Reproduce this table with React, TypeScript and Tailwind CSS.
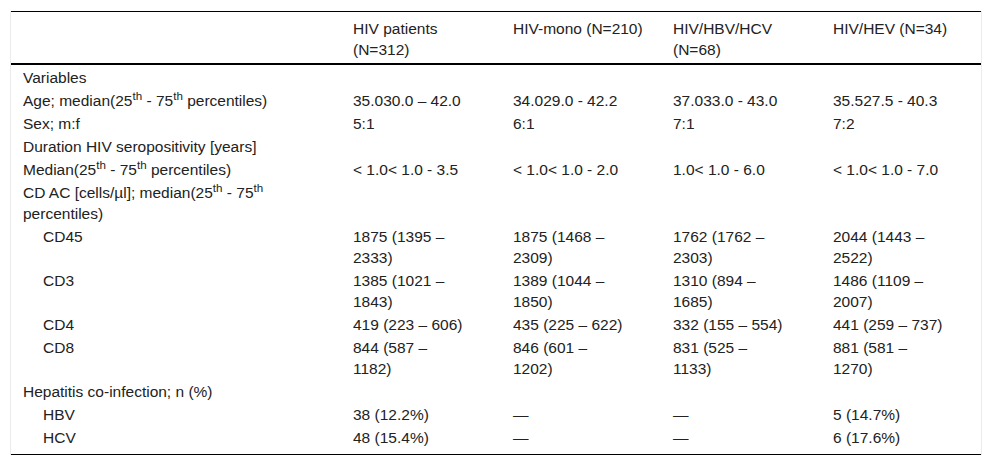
import { Fragment } from "react";

type Row = {
  label: React.ReactNode;
  indent?: boolean;
  values?: string[];
};

const th = (
  <>
    25<sup>th</sup> - 75<sup>th</sup>
  </>
);

const rows: Row[] = [
  { label: "Variables" },
  {
    label: <>Age; median({th} percentiles)</>,
    values: ["35.030.0 – 42.0", "34.029.0 - 42.2", "37.033.0 - 43.0", "35.527.5 - 40.3"],
  },
  { label: "Sex; m:f", values: ["5:1", "6:1", "7:1", "7:2"] },
  { label: "Duration HIV seropositivity [years]" },
  {
    label: <>Median({th} percentiles)</>,
    values: ["< 1.0< 1.0 - 3.5", "< 1.0< 1.0 - 2.0", "1.0< 1.0 - 6.0", "< 1.0< 1.0 - 7.0"],
  },
  { label: <>CD AC [cells/µl]; median({th} percentiles)</> },
  {
    label: "CD45",
    indent: true,
    values: ["1875 (1395 – 2333)", "1875 (1468 – 2309)", "1762 (1762 – 2303)", "2044 (1443 – 2522)"],
  },
  {
    label: "CD3",
    indent: true,
    values: ["1385 (1021 – 1843)", "1389 (1044 – 1850)", "1310 (894 – 1685)", "1486 (1109 – 2007)"],
  },
  {
    label: "CD4",
    indent: true,
    values: ["419 (223 – 606)", "435 (225 – 622)", "332 (155 – 554)", "441 (259 – 737)"],
  },
  {
    label: "CD8",
    indent: true,
    values: ["844 (587 – 1182)", "846 (601 – 1202)", "831 (525 – 1133)", "881 (581 – 1270)"],
  },
  { label: "Hepatitis co-infection; n (%)" },
  { label: "HBV", indent: true, values: ["38 (12.2%)", "—", "—", "5 (14.7%)"] },
  { label: "HCV", indent: true, values: ["48 (15.4%)", "—", "—", "6 (17.6%)"] },
];

const headers = ["HIV patients (N=312)", "HIV-mono (N=210)", "HIV/HBV/HCV (N=68)", "HIV/HEV (N=34)"];

export default function App() {
  return (
    <main className="bg-white pt-[11px] pl-[10px] w-[992px] h-[466px] text-[#222] font-['Liberation_Sans',Arial,sans-serif] text-[15.5px] leading-[21px]">
      <div className="w-[972px] border-x border-[#ececec]">
        <table className="w-full table-fixed border-collapse">
          <colgroup>
            <col className="w-[330px]" />
            <col className="w-[160px]" />
            <col className="w-[160px]" />
            <col className="w-[160px]" />
            <col />
          </colgroup>
          <thead>
            <tr className="border-t border-black border-b-2">
              <th />
              {headers.map((h) => (
                <th key={h} className="pl-3 pr-[15px] pt-[6px] pb-[3px] text-left font-normal align-top">
                  {h}
                </th>
              ))}
            </tr>
          </thead>
          <tbody className="border-b border-black">
            {rows.map((r, i) => (
              <Fragment key={i}>
                <tr className="align-top">
                  <td
                    className={`py-[1px] pr-3 ${r.indent ? "pl-8" : "pl-3"} ${i === 0 ? "pt-[2px]" : ""} ${
                      i === rows.length - 1 ? "pb-[6px]" : ""
                    }`}
                  >
                    {r.label}
                  </td>
                  {[0, 1, 2, 3].map((c) => (
                    <td
                      key={c}
                      className={`pl-3 pr-[34px] py-[1px] ${i === 0 ? "pt-[2px]" : ""} ${
                        i === rows.length - 1 ? "pb-[6px]" : ""
                      }`}
                    >
                      {r.values ? r.values[c] : ""}
                    </td>
                  ))}
                </tr>
              </Fragment>
            ))}
          </tbody>
        </table>
      </div>
    </main>
  );
}
